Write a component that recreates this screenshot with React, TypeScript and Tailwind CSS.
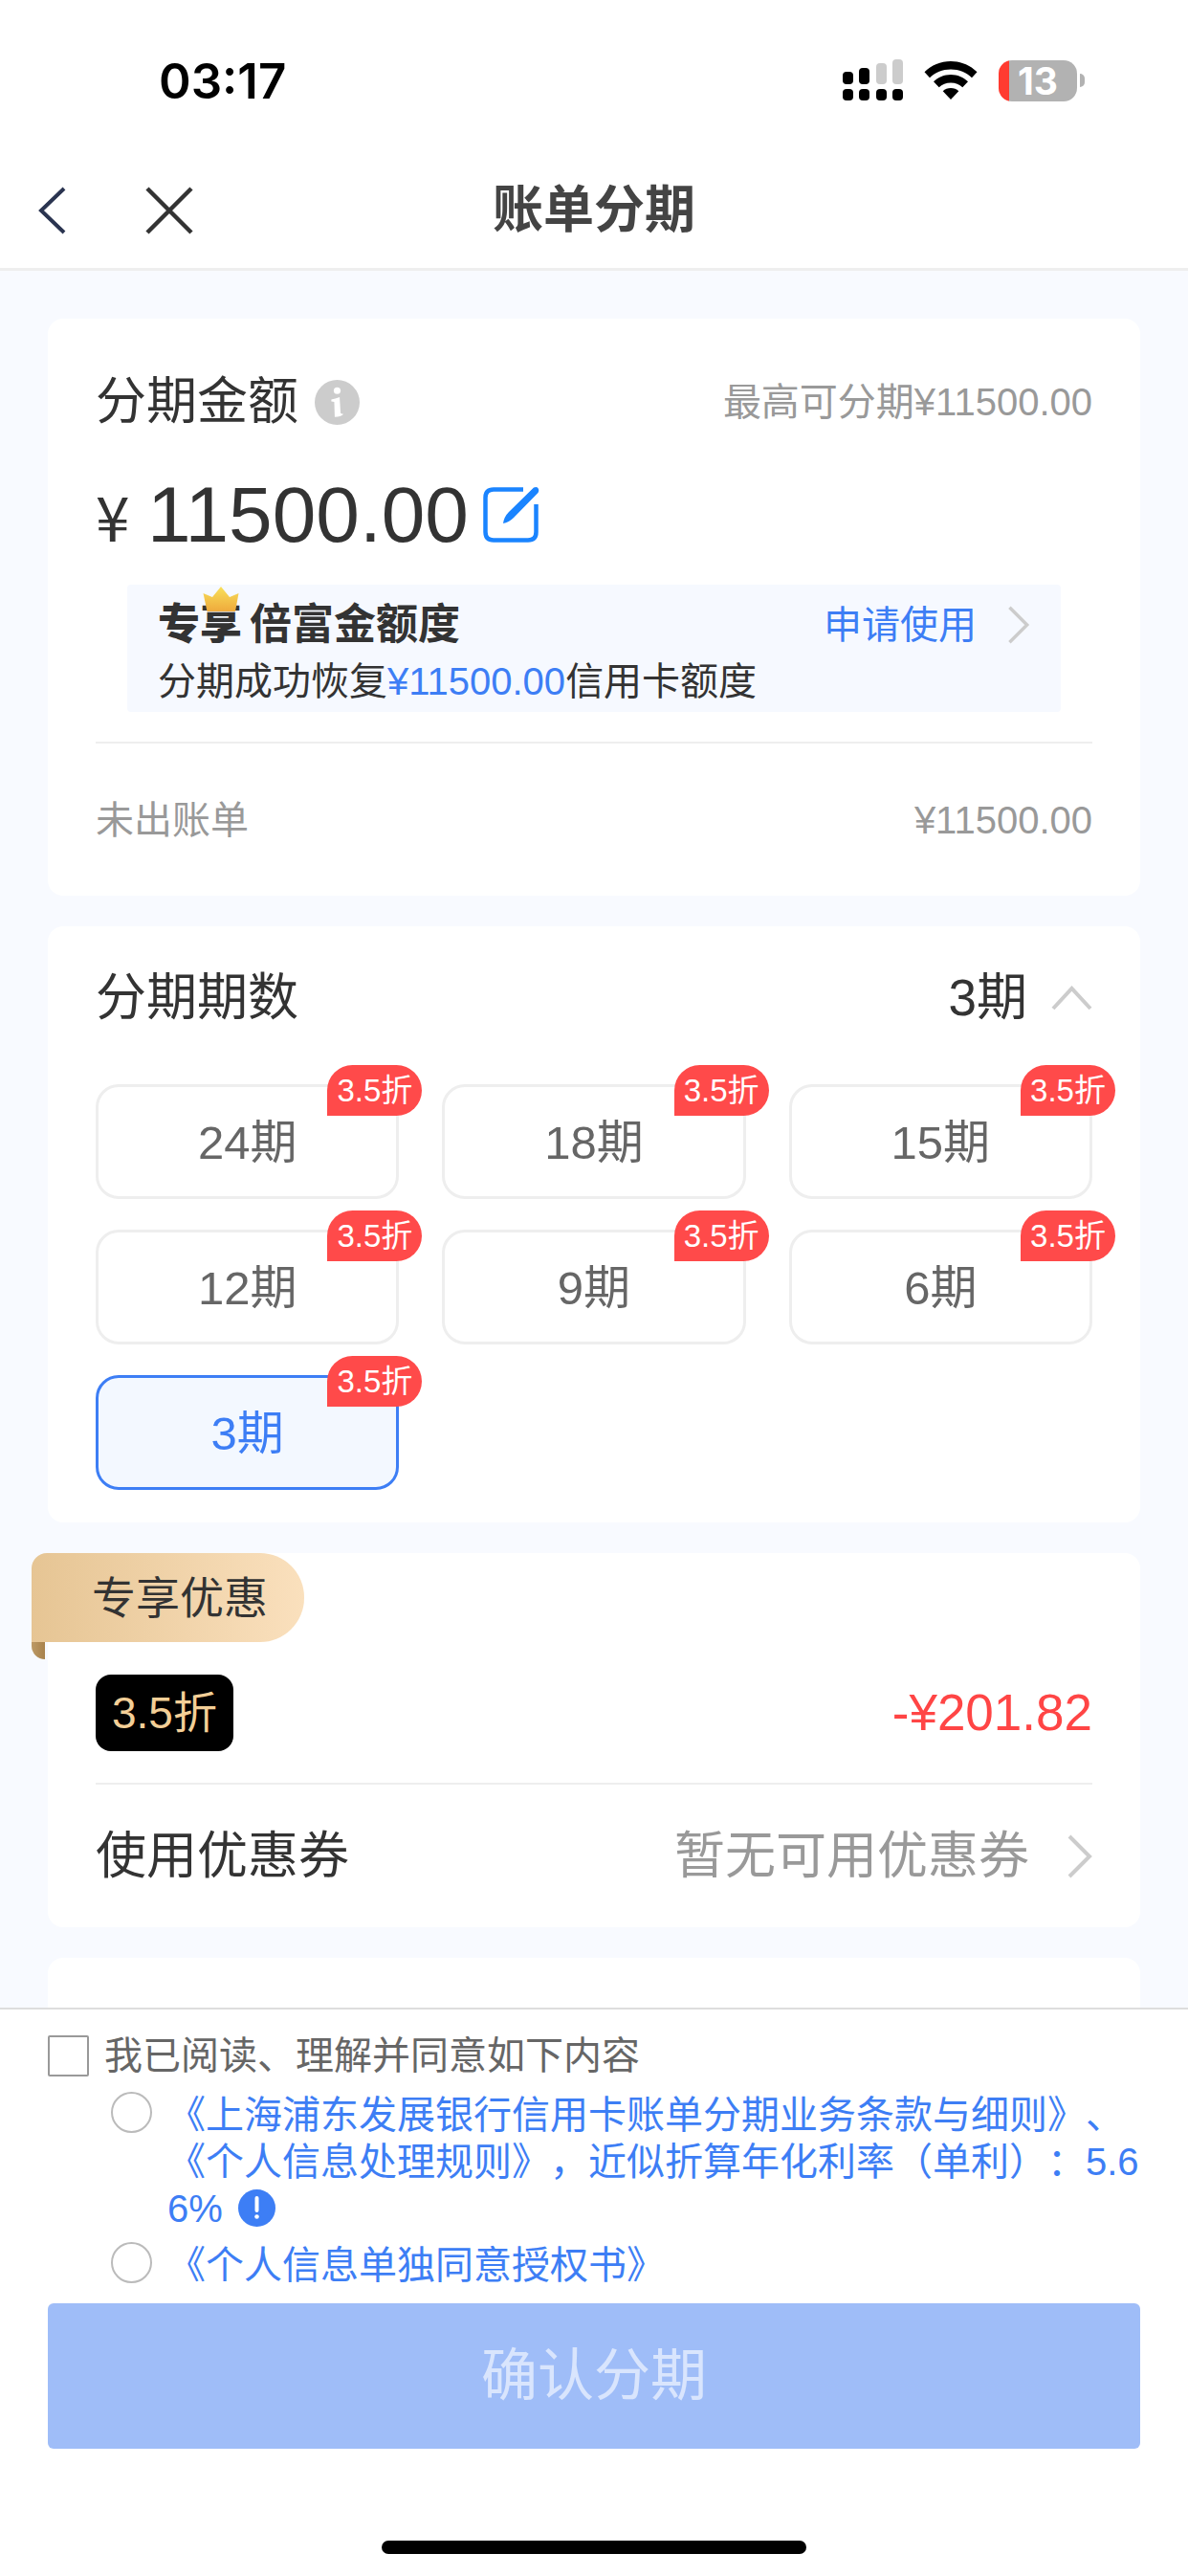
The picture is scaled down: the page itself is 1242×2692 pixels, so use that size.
import { useState } from "react";
import type { ReactNode } from "react";

const TERMS = [24, 18, 15, 12, 9, 6, 3];

type ArrowProps = { size?: "sm" | "lg" };

function ArrowRight({ size = "sm" }: ArrowProps) {
  return (
    <svg
      className={size === "lg" ? "h-[46px] w-[26px]" : "h-[40px] w-[24px]"}
      viewBox="0 0 26 46"
      fill="none"
      stroke="#cccccc"
      strokeWidth="4"
      aria-hidden="true"
    >
      <path d="M2 2 L23 23 L2 44" />
    </svg>
  );
}

function ArrowUp() {
  return (
    <svg className="h-[26px] w-[43px]" viewBox="0 0 43 26" fill="none" stroke="#cccccc" strokeWidth="4" aria-hidden="true">
      <path d="M2 24 L21.500 3 L41 24" />
    </svg>
  );
}

function SignalIcon() {
  return (
    <svg className="h-[44px] w-[63px]" viewBox="0 0 63 44" aria-hidden="true">
      <rect x="0" y="13" width="11" height="13" rx="4" />
      <rect x="17" y="9" width="11" height="17" rx="4" />
      <rect x="35" y="4" width="11" height="22" rx="4" fill="#cccccc" />
      <rect x="52" y="0" width="11" height="26" rx="4" fill="#cccccc" />
      <rect x="0" y="31" width="11" height="12" rx="4" />
      <rect x="17" y="31" width="11" height="12" rx="4" />
      <rect x="35" y="31" width="11" height="12" rx="4" />
      <rect x="52" y="31" width="11" height="12" rx="4" />
    </svg>
  );
}

function WifiIcon() {
  return (
    <svg className="h-[42px] w-[56px]" viewBox="0 0 56 42" aria-hidden="true">
      <path d="M28 1C17.400 1 7.600 5.200 0.500 12.200L6 18.300C11.700 12.800 19.400 9.500 28 9.500S44.300 12.800 50 18.300L55.500 12.200C48.400 5.200 38.600 1 28 1Z" />
      <path d="M28 15C21 15 14.700 17.800 10 22.300L15.700 28.200C18.900 25.200 23.200 23.400 28 23.400S37.100 25.200 40.300 28.200L46 22.300C41.300 17.800 35 15 28 15Z" />
      <path d="M28 29C24.800 29 21.900 30.200 19.700 32.200L28 41L36.300 32.200C34.100 30.200 31.200 29 28 29Z" />
    </svg>
  );
}

function Battery() {
  return (
    <div className="flex items-center gap-[3px]">
      <div className="flex h-[43px] w-[82px] items-center justify-center rounded-[14px] bg-[linear-gradient(90deg,#ff3b30_11px,#b2b2b2_11px)] font-[Inter] text-[39px] leading-[43px] font-bold text-white">
        13
      </div>
      <div className="h-[14px] w-[5px] rounded-r-full bg-[#b2b2b2]" />
    </div>
  );
}

function InfoIcon() {
  return (
    <svg className="size-[47px]" viewBox="0 0 46 46" aria-hidden="true">
      <circle cx="23" cy="23" r="23" fill="#cccccc" />
      <circle cx="23" cy="11" r="3.500" fill="#fff" />
      <path d="M17 20Q21 19 25.500 17.500L26.500 34Q28 35 29.500 35Q27 38 20.500 38L20 22.500Q18.500 22 17 22Z" fill="#fff" />
    </svg>
  );
}

function EditIcon() {
  return (
    <svg className="size-[60px]" viewBox="0 0 60 60" aria-hidden="true">
      <g fill="none" stroke="#1a84ff" strokeWidth="4.500">
        <path d="M43 3.500H12Q3.500 3.500 3.500 12V48Q3.500 56.500 12 56.500H48Q56.500 56.500 56.500 48V19" />
      </g>
      <path d="M54 1.500Q58 0 59 3Q60 6 57 8.500L33 33Q28 38 22 39Q23 32 28 27Z" fill="#1a84ff" />
    </svg>
  );
}

function CrownIcon() {
  return (
    <svg className="h-[26px] w-[38px]" viewBox="0 0 38 26" aria-hidden="true">
      <defs>
        <linearGradient id="crown" x1="0" y1="0" x2="0" y2="1">
          <stop offset="0" stopColor="#f8e05a" />
          <stop offset="1" stopColor="#efaa3c" />
        </linearGradient>
      </defs>
      <path d="M0.500 7L10 11L19 0L28 11L37.500 7L34 26H4.500Z" fill="url(#crown)" />
    </svg>
  );
}

function NoticeIcon() {
  return (
    <svg className="ml-[16px] inline size-[39px] align-[-5px]" viewBox="0 0 39 39" aria-hidden="true">
      <circle cx="19.500" cy="19.500" r="19.500" fill="#3d7ef5" />
      <path d="M19.500 9V22" stroke="#fff" strokeWidth="4" strokeLinecap="round" />
      <circle cx="19.500" cy="28.500" r="2.300" fill="#fff" />
    </svg>
  );
}

function Card({ children }: { children?: ReactNode }) {
  return <section className="rounded-[16px] bg-white px-[50px]">{children}</section>;
}

function StatusBar() {
  return (
    <div className="flex h-[168px] items-center justify-between pr-[108px] pl-[166px]">
      <span className="font-[Inter] text-[51px] leading-none font-semibold text-black">03:17</span>
      <div className="flex items-center gap-[22px]">
        <SignalIcon />
        <WifiIcon />
        <Battery />
      </div>
    </div>
  );
}

function NavBar() {
  return (
    <header className="grid h-[115px] grid-cols-[1fr_auto_1fr] items-center border-b-[3px] border-[#eeeeee] px-[40px] pb-[8px]">
      <div className="flex items-center gap-[83px]">
        <button type="button" aria-label="返回">
          <svg className="h-[50px] w-[29px]" viewBox="0 0 29 50" fill="none" stroke="#2a3450" strokeWidth="4" aria-hidden="true">
            <path d="M27 2L3 25L27 48" />
          </svg>
        </button>
        <button type="button" aria-label="关闭">
          <svg className="size-[50px]" viewBox="0 0 50 50" fill="none" stroke="#333333" strokeWidth="4.500" aria-hidden="true">
            <path d="M2 2L48 48M48 2L2 48" />
          </svg>
        </button>
      </div>
      <h1 className="text-[53px] leading-[64px] font-semibold text-[#444444]">账单分期</h1>
    </header>
  );
}

function AmountCard() {
  return (
    <Card>
      <div className="flex items-center justify-between pt-[55px]">
        <h2 className="flex items-center gap-[17px] text-[53px] leading-[64px]">
          分期金额
          <InfoIcon />
        </h2>
        <span className="text-[40px] leading-[64px] text-[#999999]">最高可分期¥11500.00</span>
      </div>

      <div className="mt-[38px] flex h-[96px] items-center">
        <span className="w-[54px] font-['Noto_Sans_CJK_SC'] text-[64px] leading-[86px]">¥</span>
        <span className="mr-[14px] text-[82px] leading-[96px]">11500.00</span>
        <button type="button" aria-label="修改金额">
          <EditIcon />
        </button>
      </div>

      <div className="mx-[33px] mt-[25px] h-[133px] rounded-[4px] bg-[#f6f9ff] px-[32px]">
        <div className="flex h-[84px] items-center justify-between">
          <h3 className="flex items-center gap-[8px] text-[44px] leading-[50px] font-bold">
            <span className="relative font-black">
              专享
              <span className="absolute -top-[15px] left-[47px] flex">
                <CrownIcon />
              </span>
            </span>
            倍富金额度
          </h3>
          <a href="#apply" className="flex items-center gap-[32px] text-[40px] leading-[50px] text-[#3d7ef5]">
            申请使用
            <ArrowRight />
          </a>
        </div>
        <p className="-mt-[8px] text-[40px] leading-[50px]">
          分期成功恢复<span className="text-[#3d7ef5]">¥11500.00</span>信用卡额度
        </p>
      </div>

      <div className="mt-[31px] flex h-[161px] items-center justify-between border-t-2 border-[#eeeeee] text-[40px] text-[#999999]">
        <span>未出账单</span>
        <span>¥11500.00</span>
      </div>
    </Card>
  );
}

function TermCard() {
  const [selected, setSelected] = useState(3);

  return (
    <Card>
      <div className="flex items-center justify-between pt-[43px] text-[53px] leading-[64px]">
        <h2>分期期数</h2>
        <button type="button" className="flex items-center gap-[25px]">
          {selected}期
          <ArrowUp />
        </button>
      </div>
      <div className="grid grid-cols-3 gap-x-[45px] gap-y-[32px] pt-[58px] pb-[34px]">
        {TERMS.map((term) => (
          <button
            key={term}
            type="button"
            aria-pressed={term === selected}
            onClick={() => setSelected(term)}
            className={
              term === selected
                ? "relative h-[120px] rounded-[24px] border-3 border-[#3d7ef5] bg-[#f3f8ff] pt-[3px] text-[49px] text-[#3d7ef5]"
                : "relative h-[120px] rounded-[24px] border-3 border-[#eeeeee] pt-[3px] text-[49px] text-[#666666]"
            }
          >
            {term}期
            <span className="absolute -top-[23px] -right-[27px] h-[53px] w-[99px] rounded-[27px] rounded-bl-none bg-[#ff4a4a] text-center text-[33px] leading-[53px] text-white">
              3.5折
            </span>
          </button>
        ))}
      </div>
    </Card>
  );
}

function DiscountCard() {
  return (
    <Card>
      <div className="relative -ml-[67px] flex h-[93px] w-[285px] items-center rounded-tl-[16px] rounded-r-[46px] bg-linear-to-r from-[#e6c594] to-[#fae0bd] pt-[2px] pl-[63px] text-[46px] text-[#333333]">
        专享优惠
        <span className="absolute top-full left-0 h-[18px] w-[14px] rounded-bl-[14px] bg-linear-to-r from-[#bd9a66] to-[#a8824c]" />
      </div>
      <div className="flex items-center justify-between pt-[34px] pb-[33px]">
        <span className="flex h-[80px] items-center rounded-[16px] bg-black px-[17px] text-[46px] text-[#f3cf97]">
          3.5折
        </span>
        <span className="text-[53px] text-[#ff4545]">-¥201.82</span>
      </div>
      <div className="flex h-[151px] items-center justify-between border-t-2 border-[#eeeeee] text-[53px]">
        <span>使用优惠券</span>
        <a href="#coupons" className="flex items-center gap-[40px] text-[#999999]">
          暂无可用优惠券
          <ArrowRight size="lg" />
        </a>
      </div>
    </Card>
  );
}

function Footer() {
  return (
    <footer className="border-t-2 border-[#dddddd] bg-white px-[50px] pt-[23px] pb-[23px]">
      <label className="flex items-center gap-[16px] text-[40px] leading-[50px] text-[#666666]">
        <input
          type="checkbox"
          className="size-[43px] shrink-0 appearance-none rounded-[2px] border-2 border-[#999999] bg-white"
        />
        我已阅读、理解并同意如下内容
      </label>
      <div className="-mr-[10px] pl-[66px] text-[40px] leading-[49px] text-[#3d7ef5]">
        <div className="mt-[13px] flex items-start gap-[16px]">
          <input
            id="terms"
            type="radio"
            name="terms"
            className="size-[43px] shrink-0 appearance-none rounded-full border-2 border-[#bbbbbb] bg-white"
          />
          <label htmlFor="terms" className="break-all [text-spacing-trim:space-all]">
            《上海浦东发展银行信用卡账单分期业务条款与细则》、《个人信息处理规则》，近似折算年化利率（单利）：5.66%
            <NoticeIcon />
          </label>
        </div>
        <div className="mt-[10px] flex items-start gap-[16px]">
          <input
            id="consent"
            type="radio"
            name="consent"
            className="size-[43px] shrink-0 appearance-none rounded-full border-2 border-[#bbbbbb] bg-white"
          />
          <label htmlFor="consent">《个人信息单独同意授权书》</label>
        </div>
      </div>
      <button
        type="button"
        className="mt-[15px] block h-[152px] w-full rounded-[6px] bg-[#9fbdf8] text-[59px] text-[#d9e5fd]"
      >
        确认分期
      </button>
      <div className="mx-auto mt-[96px] h-[14px] w-[444px] rounded-full bg-black" />
    </footer>
  );
}

export default function App() {
  return (
    <div
      lang="zh-CN"
      className="flex min-h-screen flex-col bg-white font-['Liberation_Sans','Noto_Sans_CJK_SC',sans-serif] text-[#333333]"
    >
      <StatusBar />
      <NavBar />
      <main className="flex grow flex-col gap-[32px] bg-[#f8faff] px-[50px] pt-[50px]">
        <AmountCard />
        <TermCard />
        <DiscountCard />
        <div className="grow rounded-t-[16px] bg-white" />
      </main>
      <Footer />
    </div>
  );
}
